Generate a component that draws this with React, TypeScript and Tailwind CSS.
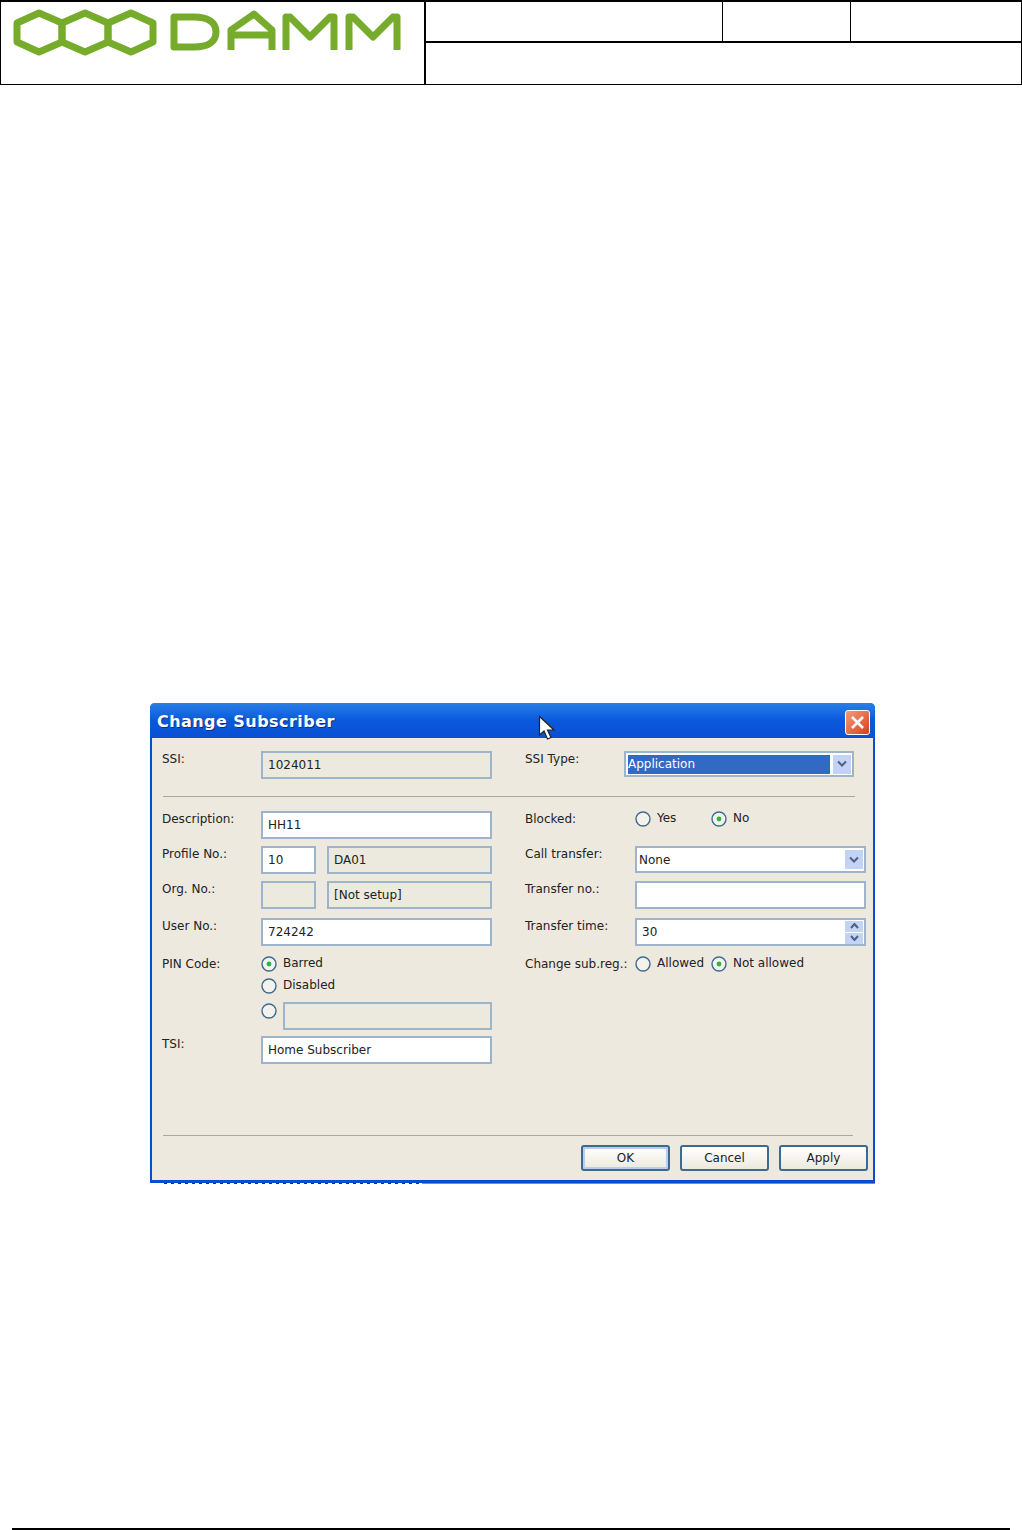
const field = 'border-2 border-[#9db4cc] flex items-center pl-[5px] shrink-0'
const radioText = 'flex items-start gap-[6px] text-[12px] leading-[15px] text-[#222]'

function Label({ children, className = '' }: { children?: React.ReactNode; className?: string }) {
  return <div className={`text-[12px] leading-[15px] text-[#222] pt-[1px] ${className}`}>{children}</div>
}

function Field({ w, value, off, h = 'h-[28px]' }: { w: string; value?: string; off?: boolean; h?: string }) {
  return (
    <div className={`${field} ${w} ${h} ${off ? 'bg-[#ece9de]' : 'bg-white'} text-[12px] text-[#222]`}>{value}</div>
  )
}

function Radio({ on }: { on?: boolean }) {
  return (
    <svg width="16" height="16" viewBox="0 0 16 16" className="shrink-0">
      <circle cx="8" cy="8" r="7" fill="#f3f2ec" stroke="#3f6b8e" strokeWidth="1.4" />
      {on && <circle cx="8" cy="8" r="2.4" fill="#2fb344" />}
    </svg>
  )
}

function Chevron() {
  return (
    <div className="w-[18px] h-[19px] bg-[#c3d3f5] flex items-center justify-center shrink-0">
      <svg width="10" height="8" viewBox="0 0 10 8">
        <path d="M1 1.500 5 5.500 9 1.500" fill="none" stroke="#4d6185" strokeWidth="2" />
      </svg>
    </div>
  )
}

function Cursor() {
  return (
    <svg width="18" height="28" viewBox="0 0 18 28" className="absolute left-[386px] top-[12px]">
      <path d="M1.500 1.500V20L6 16l3.500 8 3.500-1.500L9.500 15H16Z" fill="#fff" stroke="#222" strokeWidth="1.2" />
    </svg>
  )
}

function Button({ children, primary }: { children: string; primary?: boolean }) {
  return (
    <div
      className={`w-[89px] h-[26px] rounded-[3px] border-2 border-[#3c6a90] flex items-center justify-center text-[12px] text-[#222] bg-gradient-to-b from-white to-[#ece9de] ${
        primary ? 'shadow-[inset_0_0_0_2px_#b8cdf0]' : ''
      }`}
    >
      {children}
    </div>
  )
}

function Dialog() {
  return (
    <div className="relative w-[725px] h-[480px] ml-[150px] rounded-t-[5px] bg-[#ede9df] border-x-2 border-b-[3px] border-[#0a4cd0] flex flex-col">
      <div className="-mx-[2px] h-[35px] rounded-t-[5px] bg-gradient-to-b from-[#2a7fe6] via-[#0a58dc] to-[#0a50d2] flex items-center justify-between pl-[7px] pr-[5px] pt-[3px] shrink-0">
        <span className="text-[16px] font-bold tracking-[0.45px] text-white [text-shadow:1px_1px_#0b2f8a]">Change Subscriber</span>
        <div className="w-[25px] h-[25px] rounded-[3px] border border-white bg-gradient-to-br from-[#f09a78] to-[#d83c14] flex items-center justify-center">
          <svg width="15" height="15" viewBox="0 0 15 15">
            <path d="M2 2 13 13M13 2 2 13" stroke="#fff" strokeWidth="2.600" />
          </svg>
        </div>
      </div>

      <Cursor />

      <div className="flex-1 flex flex-col pl-[10px] pr-[5px]">
        <div className="flex pt-[13px] h-[58px]">
          <div className="w-[363px] flex">
            <Label className="w-[99px]">SSI:</Label>
            <Field w="w-[231px]" value="1024011" off />
          </div>
          <div className="flex">
            <Label className="w-[99px]">SSI Type:</Label>
            <div className="w-[230px] h-[26px] border-2 border-[#9db4cc] bg-white flex items-center pl-[2px] pr-[1px] gap-[3px]">
              <div className="w-[203px] h-[19px] bg-[#316ac5] text-white text-[12px] leading-[19px]">Application</div>
              <Chevron />
            </div>
          </div>
        </div>
        <div className="h-px bg-[#aca899] w-[692px] ml-[1px] mb-[14px]" />

        <div className="flex">
          <div className="w-[363px] flex flex-col">
            <div className="flex h-[35px]">
              <Label className="w-[99px]">Description:</Label>
              <Field w="w-[231px]" value="HH11" />
            </div>
            <div className="flex h-[35px]">
              <Label className="w-[99px]">Profile No.:</Label>
              <Field w="w-[55px]" value="10" />
              <div className="w-[11px]" />
              <Field w="w-[165px]" value="DA01" off />
            </div>
            <div className="flex h-[37px]">
              <Label className="w-[99px]">Org. No.:</Label>
              <Field w="w-[55px]" off />
              <div className="w-[11px]" />
              <Field w="w-[165px]" value="[Not setup]" off />
            </div>
            <div className="flex h-[38px]">
              <Label className="w-[99px]">User No.:</Label>
              <Field w="w-[231px]" value="724242" />
            </div>
            <div className="flex h-[22px]">
              <Label className="w-[99px]">PIN Code:</Label>
              <div className={radioText}>
                <Radio on />
                <span>Barred</span>
              </div>
            </div>
            <div className="flex h-[24px] pl-[99px]">
              <div className={radioText}>
                <Radio />
                <span>Disabled</span>
              </div>
            </div>
            <div className="flex h-[34px] pl-[99px] gap-[6px]">
              <div className="pt-[1px]">
                <Radio />
              </div>
              <Field w="w-[209px]" off />
            </div>
            <div className="flex h-[28px]">
              <Label className="w-[99px]">TSI:</Label>
              <Field w="w-[231px]" value="Home Subscriber" />
            </div>
          </div>

          <div className="flex flex-col">
            <div className="flex h-[35px]">
              <Label className="w-[110px]">Blocked:</Label>
              <div className={`${radioText} w-[76px]`}>
                <Radio />
                <span>Yes</span>
              </div>
              <div className={radioText}>
                <Radio on />
                <span>No</span>
              </div>
            </div>
            <div className="flex h-[35px]">
              <Label className="w-[110px]">Call transfer:</Label>
              <div className="w-[231px] h-[27px] border-2 border-[#9db4cc] bg-white flex items-center justify-between pl-[2px] pr-[1px] text-[12px] text-[#222]">
                None
                <Chevron />
              </div>
            </div>
            <div className="flex h-[37px]">
              <Label className="w-[110px]">Transfer no.:</Label>
              <Field w="w-[231px]" />
            </div>
            <div className="flex h-[38px]">
              <Label className="w-[110px]">Transfer time:</Label>
              <div className="w-[231px] h-[28px] border-2 border-[#9db4cc] bg-white flex items-center justify-between pl-[5px] pr-[1px] text-[12px] text-[#222]">
                30
                <div className="flex flex-col gap-px">
                  <div className="w-[18px] h-[11px] bg-[#c3d3f5] flex items-center justify-center">
                    <svg width="9" height="6" viewBox="0 0 9 6"><path d="M1 5 4.500 1 8 5" fill="none" stroke="#4d6185" strokeWidth="2" /></svg>
                  </div>
                  <div className="w-[18px] h-[11px] bg-[#c3d3f5] flex items-center justify-center">
                    <svg width="9" height="6" viewBox="0 0 9 6"><path d="M1 1 4.500 5 8 1" fill="none" stroke="#4d6185" strokeWidth="2" /></svg>
                  </div>
                </div>
              </div>
            </div>
            <div className="flex h-[22px]">
              <Label className="w-[110px] whitespace-nowrap">Change sub.reg.:</Label>
              <div className={`${radioText} w-[76px]`}>
                <Radio />
                <span>Allowed</span>
              </div>
              <div className={radioText}>
                <Radio on />
                <span>Not allowed</span>
              </div>
            </div>
          </div>
        </div>

        <div className="mt-auto h-px bg-[#aca899] w-[690px] ml-[1px]" />
        <div className="flex justify-end gap-[10px] pt-[9px] pb-[9px]">
          <Button primary>OK</Button>
          <Button>Cancel</Button>
          <Button>Apply</Button>
        </div>
      </div>
    </div>
  )
}

function Logo() {
  return (
    <svg width="400" height="50" viewBox="10 8 400 50">
      <g fill="none" stroke="#76ab2c" strokeWidth="7" strokeLinejoin="round">
        <path d="M17 23 39 13 62 23V42L39 52 17 42Z" />
        <path d="M62 23 85 13 108 23V42L85 52 62 42Z" />
        <path d="M108 23 131 13 153 23V42L131 52 108 42Z" />
        <path d="M174 17V47H194C209 47 216 41 216 32S209 17 194 17Z" />
        <path d="M231 50V30L254 14 272 30V50M231 35H272" />
        <path d="M286 50V17H290L310 37 330 17H334V50" />
        <path d="M349 50V17H353L373 37 393 17H397V50" />
      </g>
    </svg>
  )
}

export default function App() {
  return (
    <div className="w-[1022px] h-[1530px] bg-white flex flex-col font-['DejaVu_Sans',sans-serif] overflow-hidden">
      <div className="h-[85px] border border-black border-t-2 flex shrink-0">
        <div className="w-[425px] border-r-2 border-black shrink-0 pt-[6px] pl-[9px]">
          <Logo />
        </div>
        <div className="flex-1 flex flex-col">
          <div className="h-[41px] border-b-2 border-black flex">
            <div className="w-[297px] border-r border-black" />
            <div className="w-[128px] border-r border-black" />
            <div className="flex-1" />
          </div>
          <div className="flex-1" />
        </div>
      </div>

      <div className="mt-[618px] shrink-0">
        <Dialog />
      </div>

      {/* whatever was under the dialog when it was captured */}
      <div className="ml-[150px] w-[725px] h-[2px] flex items-start shrink-0">
        <div className="w-[258px] h-px bg-[repeating-linear-gradient(90deg,#333_0px,#333_3px,transparent_3px,transparent_7px)] ml-[14px] mr-0" />
        <div className="flex-1 h-px bg-[#8a8a8a]" />
      </div>

      <div className="mt-[343px] mx-[12px] h-[2px] bg-black shrink-0" />
    </div>
  )
}
